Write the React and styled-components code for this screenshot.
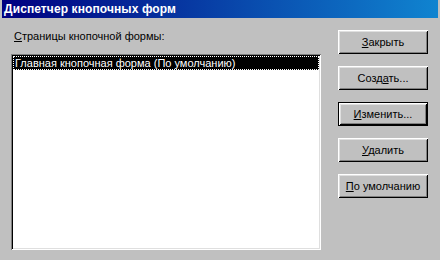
import styled, { createGlobalStyle } from "styled-components";

const GlobalStyle = createGlobalStyle`
  html, body {
    margin: 0;
    padding: 0;
    background: #c0c0c0;
  }
  body {
    font-family: "Liberation Sans", Arial, sans-serif;
    font-size: 11px;
    color: #000;
  }
`;

const Window = styled.div`
  width: 440px;
  height: 260px;
  box-sizing: border-box;
  padding: 0 2px;
  background: #c0c0c0;
  display: flex;
  flex-direction: column;
  overflow: hidden;
`;

const TitleBar = styled.div`
  height: 18px;
  background: linear-gradient(to right, #000080, #1084d0);
  display: flex;
  align-items: center;
  padding-left: 2px;
  color: #fff;
  font-weight: bold;
  font-size: 12px;
  letter-spacing: 0.1px;
`;

const Body = styled.div`
  display: flex;
  padding: 12px 0 0 9px;
  gap: 17px;
`;

const LeftColumn = styled.div`
  display: flex;
  flex-direction: column;
`;

const Label = styled.div`
  height: 13px;
  line-height: 13px;
  margin: 0 0 11px 3px;
  font-size: 11px;
`;

const Key = styled.span`
  text-decoration: underline;
`;

const ListBox = styled.div`
  width: 310px;
  height: 196px;
  box-sizing: border-box;
  background: #fff;
  padding: 2px;
  box-shadow: inset 1px 1px #808080, inset -1px -1px #fff,
    inset 2px 2px #000, inset -2px -2px #dfdfdf;
`;

const ListItem = styled.div`
  height: 14px;
  line-height: 14px;
  padding-left: 2px;
  white-space: nowrap;
  font-size: 11px;
  background: ${(p) => (p.selected ? "#000" : "transparent")};
  color: ${(p) => (p.selected ? "#fff" : "#000")};
  outline: ${(p) => (p.selected ? "1px dotted #fff" : "none")};
  outline-offset: -1px;
`;

const ButtonColumn = styled.div`
  display: flex;
  flex-direction: column;
  gap: 12px;
`;

const Button = styled(({ isDefault, ...props }) => <button {...props} />)`
  width: 90px;
  height: 24px;
  box-sizing: border-box;
  background: #c0c0c0;
  font-family: "Liberation Sans", Arial, sans-serif;
  font-size: 11px;
  color: #000;
  padding: 0;
  border: ${(p) => (p.isDefault ? "1px solid #000" : "none")};
  box-shadow: inset 1px 1px #fff, inset -1px -1px #000,
    inset 2px 2px #dfdfdf, inset -2px -2px #808080;
  cursor: default;
`;

const pages = [
  { title: "Главная кнопочная форма (По умолчанию)", selected: true },
];

const App = () => (
  <>
    <GlobalStyle />
    <Window>
      <TitleBar>Диспетчер кнопочных форм</TitleBar>
      <Body>
        <LeftColumn>
          <Label>
            <Key>С</Key>траницы кнопочной формы:
          </Label>
          <ListBox>
            {pages.map((p) => (
              <ListItem key={p.title} selected={p.selected}>
                {p.title}
              </ListItem>
            ))}
          </ListBox>
        </LeftColumn>
        <ButtonColumn>
          <Button>
            <Key>З</Key>акрыть
          </Button>
          <Button>
            Созд<Key>а</Key>ть...
          </Button>
          <Button isDefault>
            <Key>И</Key>зменить...
          </Button>
          <Button>
            <Key>У</Key>далить
          </Button>
          <Button>
            <Key>П</Key>о умолчанию
          </Button>
        </ButtonColumn>
      </Body>
    </Window>
  </>
);

export default App;
